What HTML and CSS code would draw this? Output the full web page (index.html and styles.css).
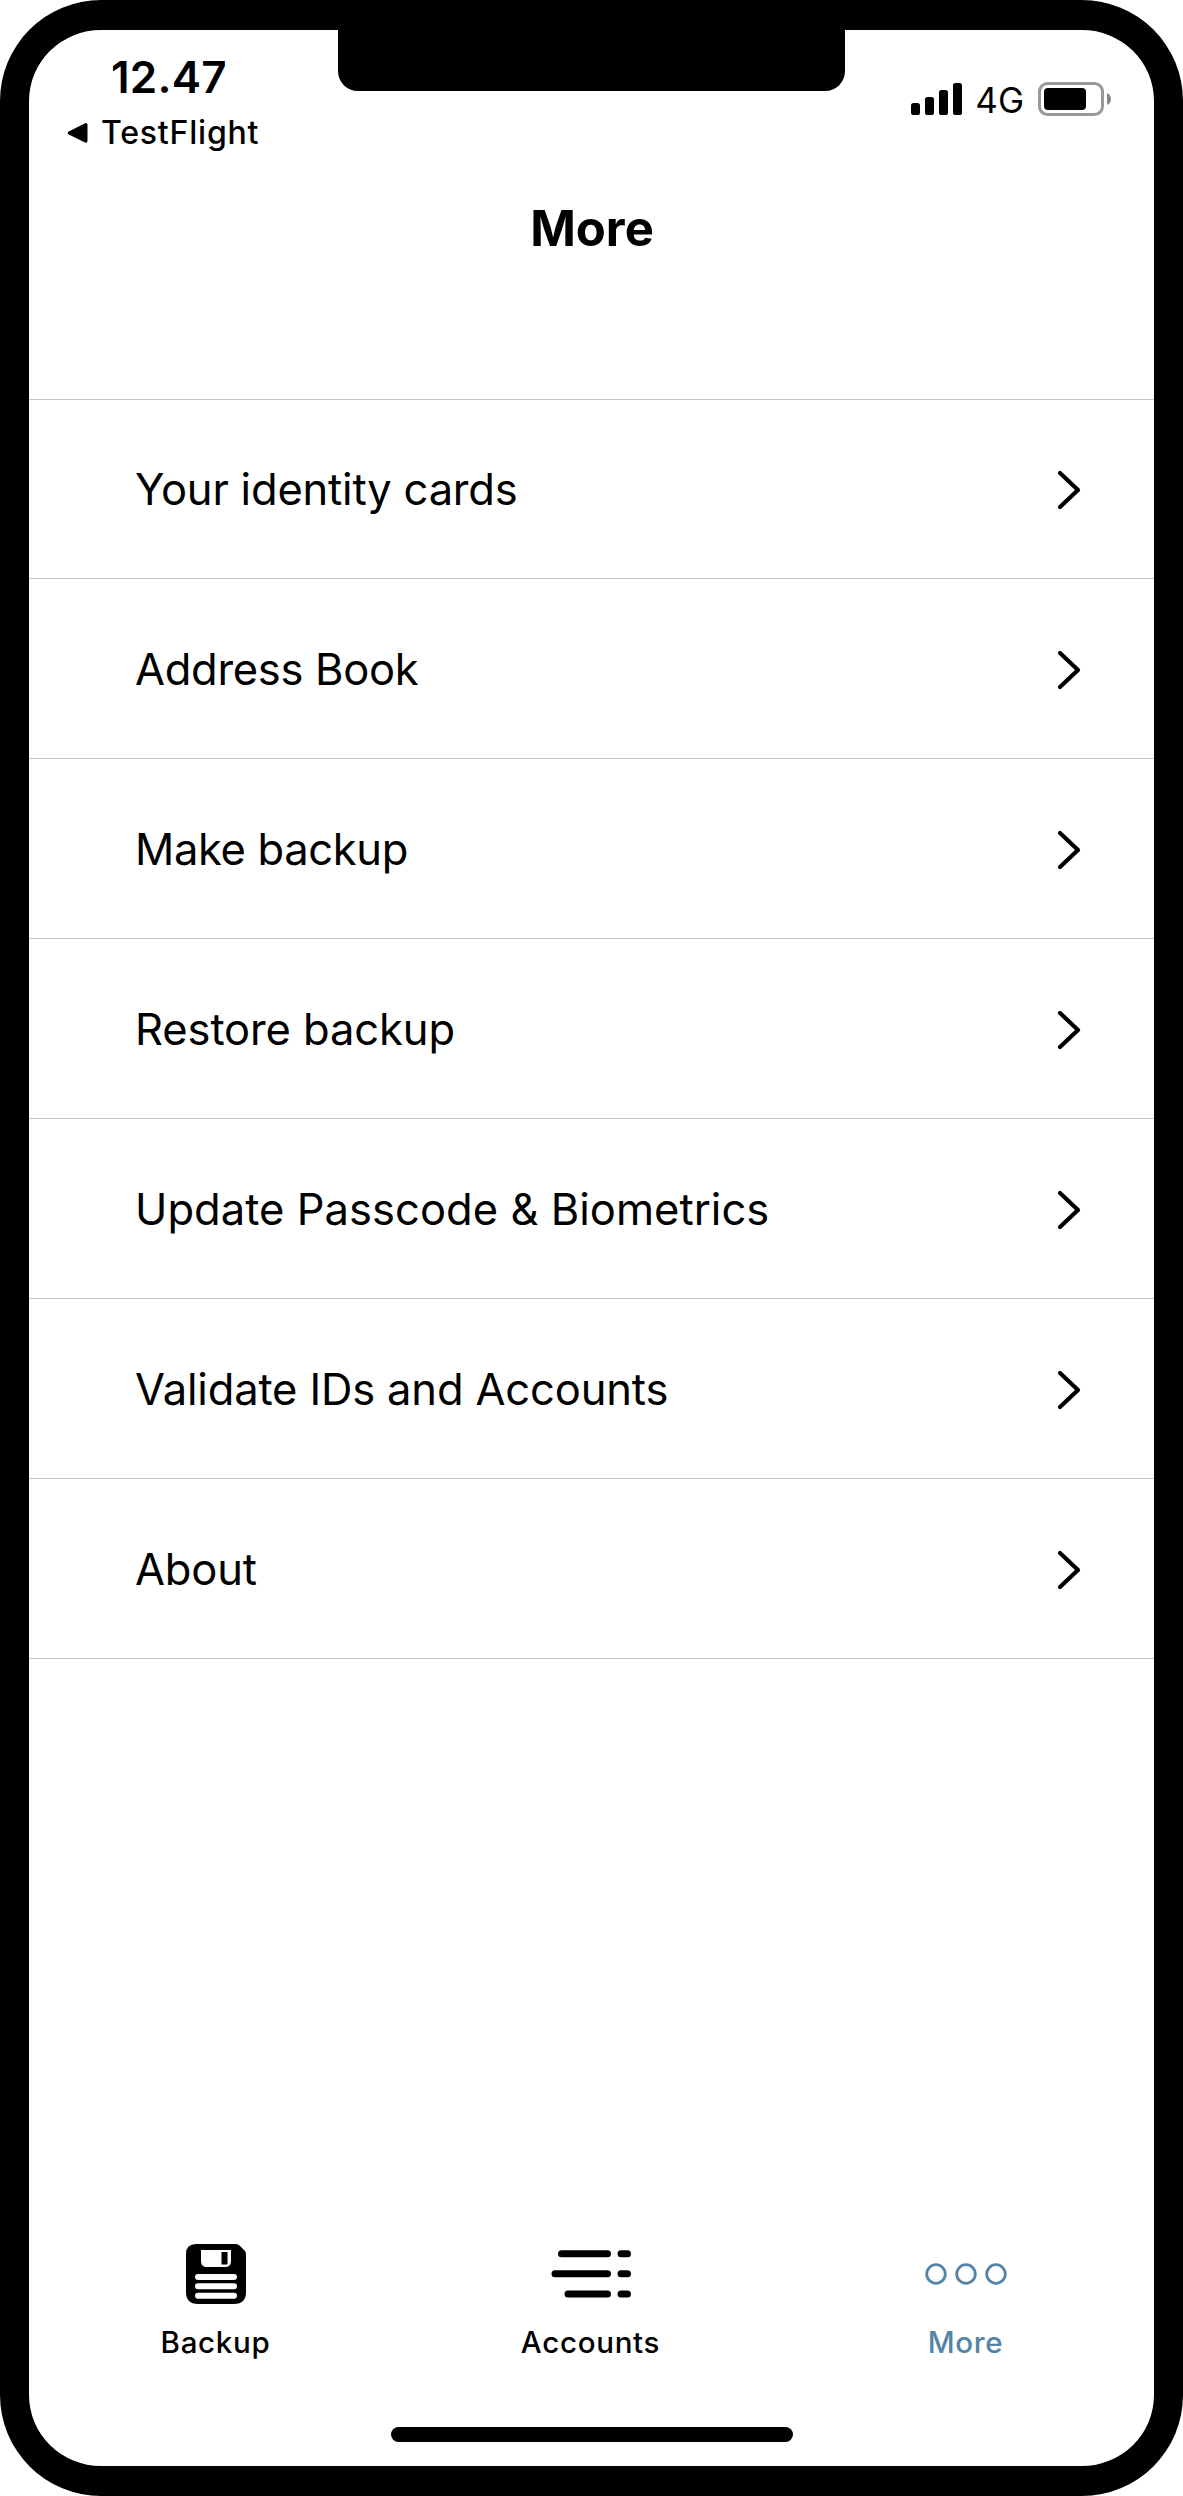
FILE: index.html
```html
<!DOCTYPE html>
<html lang="en">
<head>
<meta charset="utf-8">
<title>More</title>
<link rel="stylesheet" href="styles.css">
</head>
<body>
<div class="phone">
  <div class="notch"></div>
  <header class="status">
    <div class="status-left">
      <div class="time">12.47</div>
      <div class="back">
        <svg width="22" height="22" viewBox="0 0 22 22"><path d="M2.5 11 L18.8 2.8 L18.8 19 Z" stroke="#000" stroke-width="3.4" stroke-linejoin="round"/></svg>
        <span>TestFlight</span>
      </div>
    </div>
    <div class="status-right">
      <svg width="52" height="34" viewBox="0 0 52 34"><rect x="0" y="21" width="9" height="12" rx="2.6"/><rect x="14" y="15" width="9" height="18" rx="2.6"/><rect x="28" y="8" width="9" height="25" rx="2.6"/><rect x="42" y="1" width="9" height="32" rx="2.6"/></svg>
      <span class="net">4G</span>
      <svg width="74" height="34" viewBox="0 0 74 34"><rect x="1.5" y="1.5" width="63" height="31" rx="8" fill="none" stroke="#999" stroke-width="3"/><rect x="6" y="6" width="42" height="22" rx="4"/><path d="M69 11 A6.5 6.5 0 0 1 69 23 Z" fill="#888"/></svg>
    </div>
  </header>
  <h1 class="title">More</h1>
  <ul class="menu">
    <li class="row"><span class="label">Your identity cards</span><svg class="chev" viewBox="0 0 24 40"><path d="M3 3 L21 20 L3 37"/></svg></li>
    <li class="row"><span class="label">Address Book</span><svg class="chev" viewBox="0 0 24 40"><path d="M3 3 L21 20 L3 37"/></svg></li>
    <li class="row"><span class="label">Make backup</span><svg class="chev" viewBox="0 0 24 40"><path d="M3 3 L21 20 L3 37"/></svg></li>
    <li class="row"><span class="label">Restore backup</span><svg class="chev" viewBox="0 0 24 40"><path d="M3 3 L21 20 L3 37"/></svg></li>
    <li class="row"><span class="label">Update Passcode &amp; Biometrics</span><svg class="chev" viewBox="0 0 24 40"><path d="M3 3 L21 20 L3 37"/></svg></li>
    <li class="row"><span class="label">Validate IDs and Accounts</span><svg class="chev" viewBox="0 0 24 40"><path d="M3 3 L21 20 L3 37"/></svg></li>
    <li class="row"><span class="label">About</span><svg class="chev" viewBox="0 0 24 40"><path d="M3 3 L21 20 L3 37"/></svg></li>
  </ul>
  <nav class="tabs">
    <div class="tab">
      <svg width="60" height="60" viewBox="0 0 60 60"><path d="M10 0 H50 Q52 0 53.500 1.500 L58.500 6.500 Q60 8 60 10 V48 Q60 60 48 60 H12 Q0 60 0 48 V10 Q0 0 10 0 Z"/><path d="M15 6 H45 V17 Q45 23 39 23 H21 Q15 23 15 17 Z" fill="#fff"/><rect x="35.500" y="8" width="6" height="12.500"/><path d="M12 33 H48 M12 42.300 H48 M12 51.700 H48" stroke="#fff" stroke-width="6" stroke-linecap="round"/></svg>
      <span>Backup</span>
    </div>
    <div class="tab">
      <svg width="80" height="60" viewBox="0 0 80 60"><path d="M10.500 9.700 H56.500 M70 9.700 H76.500 M4 29.700 H56.500 M70 29.700 H76.500 M17 50 H56.500 M70 50 H76.500" stroke="#000" stroke-width="7" stroke-linecap="round"/></svg>
      <span>Accounts</span>
    </div>
    <div class="tab active">
      <svg width="82" height="60" viewBox="0 0 82 60" fill="none" stroke="#5484a8" stroke-width="2.800"><circle cx="11" cy="30" r="9.300"/><circle cx="41" cy="30" r="9.300"/><circle cx="71" cy="30" r="9.300"/></svg>
      <span>More</span>
    </div>
  </nav>
  <div class="home"></div>
</div>
</body>
</html>
```
FILE: styles.css
```css
* { box-sizing: border-box; }
body { margin: 0; background: #fff; color: #000; font-family: Inter, "Liberation Sans", sans-serif; }
svg { display: block; flex: none; }
.phone { position: relative; display: flex; flex-direction: column; width: 1183px; height: 2496px; border: 30px solid #000; border-left-width: 29px; border-right-width: 29px; border-radius: 101px; background: #fff; overflow: hidden; }
.notch { position: absolute; left: 309px; top: -1px; width: 507px; height: 62px; background: #000; border-radius: 0 0 20px 20px; }
.status { display: flex; justify-content: space-between; height: 130px; padding: 20px 42px 0 38px; }
.time { height: 54px; line-height: 54px; padding-left: 44px; font-size: 44px; font-weight: 600; letter-spacing: 0.2px; }
.back { display: flex; align-items: center; gap: 12px; height: 57px; font-size: 32px; font-weight: 500; letter-spacing: 0.8px; }
.status-right { display: flex; align-items: center; gap: 13px; height: 98px; }
.net { margin: 0 1px 0 -1px; padding-top: 2px; font-size: 35px; }
.title { margin: 0; height: 239px; padding: 39px 0 0 1px; line-height: 60px; font-size: 49px; font-weight: 700; text-align: center; }
.menu { margin: 0; padding: 0; list-style: none; border-top: 1px solid #c6c6c8; }
.row { display: flex; align-items: center; justify-content: space-between; height: 180px; padding: 2px 73px 0 106px; border-bottom: 1px solid #c6c6c8; font-size: 43.5px; letter-spacing: -0.15px; }
.row:first-child { height: 179px; padding-top: 1px; letter-spacing: -0.2px; }
.row:nth-child(2) { letter-spacing: -0.3px; }
.row:nth-child(3) { letter-spacing: -0.35px; }
.row:nth-child(4) { letter-spacing: -0.1px; }
.row:nth-child(5) { letter-spacing: 0.04px; }
.label { padding-bottom: 2px; }
.chev { width: 24px; height: 40px; fill: none; stroke: #000; stroke-width: 4.2; stroke-linecap: round; stroke-linejoin: round; }
.tabs { display: grid; grid-template-columns: repeat(3, 375px); margin: auto 0 0 -1px; height: 183px; }
.tab { display: flex; flex-direction: column; align-items: center; gap: 20px; font-size: 29.5px; font-weight: 500; line-height: 36px; letter-spacing: 0.7px; }
.active { color: #5484a8; }
.home { width: 402px; height: 15px; margin: 0 auto 24px; border-radius: 8px; background: #000; }
```
